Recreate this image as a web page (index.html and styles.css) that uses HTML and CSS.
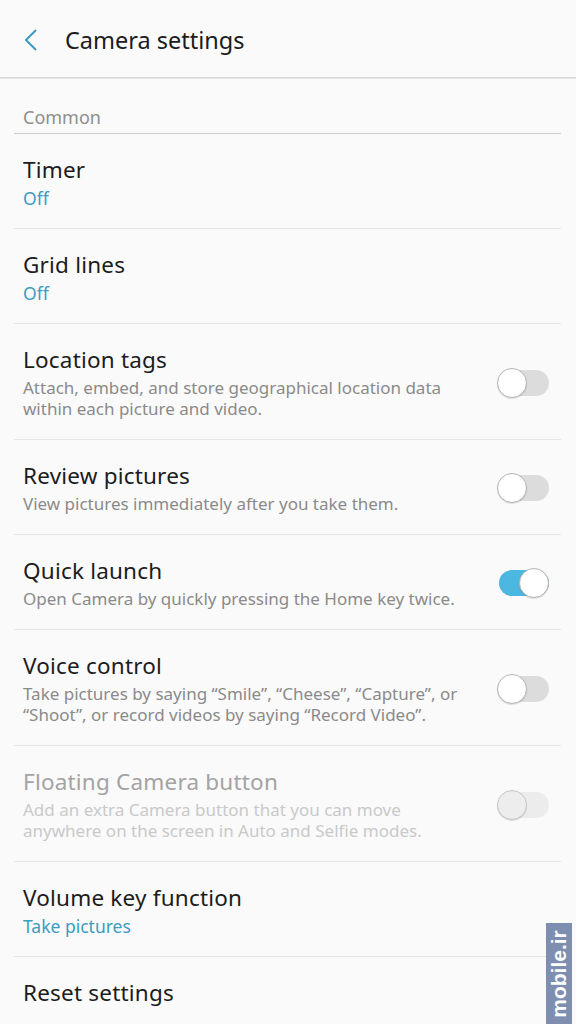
FILE: index.html
```html
<!DOCTYPE html>
<html>
	<head>
		<title>Camera settings</title>
		<link rel="stylesheet" href="styles.css">
	</head>
	<body>
	<div class="appbar">
		<svg class="back" width="14" height="22" viewBox="0 0 14 22"><path d="M12 1 L2 11 L12 21" fill="none" stroke="#3a9bc0" stroke-width="2"/></svg>
		<span class="appbar-title">Camera settings</span>
	</div>

	<div class="section">Common</div>

	<div class="row">
		<div class="text">
			<div class="title">Timer</div>
			<div class="value">Off</div>
		</div>
	</div>
	<div class="row">
		<div class="text">
			<div class="title">Grid lines</div>
			<div class="value">Off</div>
		</div>
	</div>
	<div class="row">
		<div class="text">
			<div class="title">Location tags</div>
			<div class="desc">Attach, embed, and store geographical location data<br>within each picture and video.</div>
		</div>
		<span class="switch"></span>
	</div>
	<div class="row">
		<div class="text">
			<div class="title">Review pictures</div>
			<div class="desc">View pictures immediately after you take them.</div>
		</div>
		<span class="switch"></span>
	</div>
	<div class="row">
		<div class="text">
			<div class="title">Quick launch</div>
			<div class="desc">Open Camera by quickly pressing the Home key twice.</div>
		</div>
		<span class="switch on"></span>
	</div>
	<div class="row">
		<div class="text">
			<div class="title">Voice control</div>
			<div class="desc">Take pictures by saying “Smile”, “Cheese”, “Capture”, or<br>“Shoot”, or record videos by saying “Record Video”.</div>
		</div>
		<span class="switch"></span>
	</div>
	<div class="row disabled">
		<div class="text">
			<div class="title">Floating Camera button</div>
			<div class="desc">Add an extra Camera button that you can move<br>anywhere on the screen in Auto and Selfie modes.</div>
		</div>
		<span class="switch"></span>
	</div>
	<div class="row">
		<div class="text">
			<div class="title">Volume key function</div>
			<div class="value">Take pictures</div>
		</div>
	</div>
	<div class="row last">
		<div class="text">
			<div class="title">Reset settings</div>
		</div>
	</div>

	<div class="badge"><span>mobile.ir</span></div>
	</body>
</html>
```

FILE: styles.css
```css
body
{
	margin: 0;
	background: #fafafa;
	font-family: "Noto Sans", Roboto, sans-serif;
	color: #1c1c1c;
	height: 1024px;
	overflow: hidden;
}

.appbar
{
	height: 77px;
	display: flex;
	align-items: center;
	border-bottom: 1px solid #d6d6d6;
	box-shadow: 0 1px 0 #e6e6e6;
}
.back
{
	margin: 2px 0 0 24px;
}
.appbar-title
{
	font-size: 23.5px;
	margin: 3px 0 0 27px;
}

.section
{
	margin: 0 15px 0 14px;
	padding: 28px 0 5px 9px;
	font-size: 18px;
	line-height: 22px;
	color: #8e8e8e;
	border-bottom: 1px solid #cdcdcd;
}

.row
{
	display: flex;
	align-items: center;
	margin: 0 15px 0 14px;
	padding: 22px 0 20px 9px;
	border-bottom: 1px solid #e6e6e6;
}
.row.last
{
	border-bottom: none;
}
.text
{
	flex: 1;
}
.title
{
	font-size: 22.5px;
	line-height: 28px;
	letter-spacing: 0.2px;
}
.value
{
	font-size: 17.5px;
	line-height: 22px;
	margin: 3px 0 -1px;
	color: #3d9cc2;
}
.desc
{
	font-size: 17px;
	line-height: 21px;
	margin-top: 3px;
	color: #8a8a8a;
}
.disabled .title
{
	color: #a3a3a3;
}
.disabled .desc
{
	color: #c9c9c9;
}

.switch
{
	position: relative;
	width: 52px;
	height: 30px;
	margin-right: 12px;
	flex: none;
}
.switch::before
{
	content: "";
	position: absolute;
	left: 2px;
	right: 0;
	top: 2px;
	height: 26px;
	border-radius: 13px;
	background: #dcdcdc;
}
.switch::after
{
	content: "";
	position: absolute;
	left: 0;
	top: 0;
	width: 28px;
	height: 28px;
	border-radius: 50%;
	background: #fff;
	border: 1px solid #b4b4b4;
	box-shadow: 0 1px 1px rgba(0, 0, 0, 0.12);
}
.switch.on::before
{
	background: #4cb7e1;
}
.switch.on::after
{
	left: 22px;
}
.disabled .switch::before
{
	background: #ececec;
}
.disabled .switch::after
{
	background: #ededed;
	border-color: #c6c6c6;
}

.badge
{
	position: absolute;
	left: 546px;
	top: 923px;
	width: 26px;
	height: 101px;
	background: #7d8eb0;
	display: flex;
	align-items: center;
	justify-content: center;
}
.badge span
{
	transform: rotate(-90deg);
	color: #fff;
	font-family: "Liberation Sans", Arial, sans-serif;
	font-weight: bold;
	font-size: 21px;
	white-space: nowrap;
}
```
